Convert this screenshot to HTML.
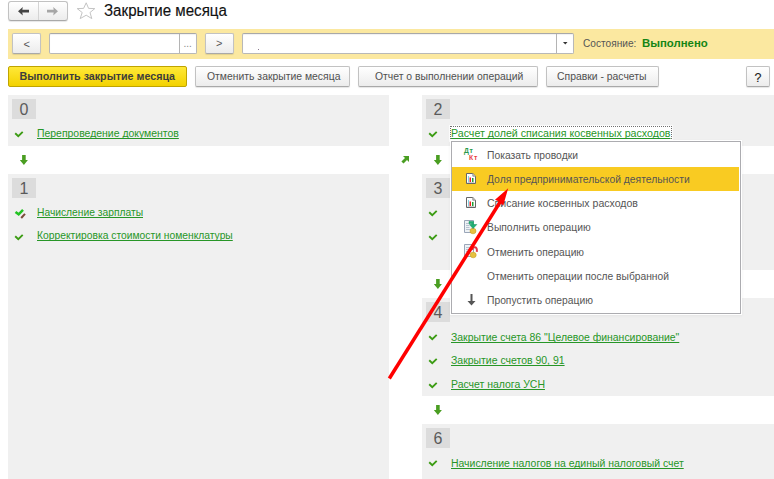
<!DOCTYPE html>
<html><head><meta charset="utf-8">
<style>
*{margin:0;padding:0;box-sizing:border-box}
html,body{width:774px;height:479px;overflow:hidden;background:#fff;font-family:"Liberation Sans",sans-serif;color:#4d4d4d;position:relative}
.a{position:absolute}
.t{position:absolute;white-space:nowrap;line-height:12px;font-size:10.4px}
.btn{position:absolute;border:1px solid #c2c2c2;border-bottom-color:#a9a9a9;border-radius:2px;background:linear-gradient(#ffffff,#ececec);box-shadow:0 1px 1px rgba(0,0,0,.10)}
.inp{position:absolute;background:#fff;border:1px solid #b8b8b8;border-top-color:#a8a8a8;border-radius:2px;box-shadow:inset 0 1px 1px rgba(0,0,0,.06)}
.panel{position:absolute;background:#f0f0f0}
.num{position:absolute;width:24px;height:19.6px;background:#dcdcdc;color:#5a5a5a;font-size:16px;line-height:22px;text-align:center}
.lnk{position:absolute;white-space:nowrap;font-size:10.4px;line-height:12px;color:#279627;text-decoration:underline;text-underline-offset:1px;text-decoration-skip-ink:none}
.chk{position:absolute;width:9px;height:6px}
.darr{position:absolute;width:9px;height:10px}
.mi{position:absolute;left:36px;white-space:nowrap;font-size:10.4px;line-height:12px;color:#4a4a4a}
</style></head><body>

<!-- nav buttons -->
<div class="btn" style="left:8px;top:1px;width:60px;height:20px;border-radius:3px"></div>
<div class="a" style="left:38px;top:2px;width:1px;height:18px;background:#d4d4d4"></div>
<svg class="a" style="left:18px;top:7px" width="12" height="9" viewBox="0 0 12 9"><path d="M0 4.2 L4.8 0 L4.3 2.7 L11 2.7 L11 5.5 L4.3 5.5 L4.8 8.4 Z" fill="#444"/></svg>
<svg class="a" style="left:47px;top:7px" width="12" height="9" viewBox="0 0 12 9"><path d="M11 4.2 L6.2 0 L6.7 2.7 L0 2.7 L0 5.5 L6.7 5.5 L6.2 8.4 Z" fill="#a6a6a6"/></svg>
<!-- star -->
<svg class="a" style="left:76px;top:2px" width="20" height="18" viewBox="0 0 20 18"><path d="M10.2 0.8 L12.6 6.4 L18.8 6.6 L14 10.5 L15.8 16.6 L10.2 13.2 L4.2 16.6 L6.2 10.5 L1.2 6.6 L7.6 6.4 Z" fill="none" stroke="#c4c4c4" stroke-width="1"/></svg>
<div class="t" style="left:104px;top:2px;font-size:16px;line-height:18px;color:#111;transform:scaleX(0.944);transform-origin:0 0;-webkit-text-stroke:0.15px #111">Закрытие месяца</div>

<!-- yellow bar -->
<div class="a" style="left:8px;top:28.5px;width:766px;height:30px;background:#fbe8a0"></div>
<div class="btn" style="left:12px;top:33px;width:29px;height:21px"></div>
<div class="t" style="left:23.5px;top:37.5px;color:#555;font-size:11px">&lt;</div>
<div class="inp" style="left:49px;top:33px;width:148px;height:21px"></div>
<div class="a" style="left:179px;top:34px;width:1px;height:19px;background:#b4b4b4"></div>
<div class="t" style="left:183.5px;top:37.5px;color:#888;font-size:10px">...</div>
<div class="btn" style="left:205px;top:33px;width:29px;height:21px"></div>
<div class="t" style="left:216px;top:37px;color:#555;font-size:11px">&gt;</div>
<div class="inp" style="left:242px;top:33px;width:332px;height:21px"></div>
<div class="a" style="left:258px;top:49px;width:1px;height:1px;background:#8a7a90"></div>
<div class="a" style="left:556px;top:34px;width:1px;height:19px;background:#b4b4b4"></div>
<svg class="a" style="left:562.5px;top:42px" width="5" height="3"><path d="M0 0 L4.5 0 L2.25 2.6 Z" fill="#333"/></svg>
<div class="t" style="left:583px;top:38px;font-size:10.15px;color:#555">Состояние:</div>
<div class="t" style="left:642px;top:37px;font-size:11.4px;font-weight:bold;color:#158515">Выполнено</div>

<!-- action buttons -->
<div class="a" style="left:8px;top:66px;width:179px;height:21px;border:1px solid #bfa400;border-radius:2px;background:linear-gradient(#ffe838,#f3d200)"></div>
<div class="t" style="left:19.5px;top:70.2px;font-size:10.7px;font-weight:bold;color:#3d3d3d">Выполнить закрытие месяца</div>
<div class="btn" style="left:195px;top:66px;width:155px;height:21px"></div>
<div class="t" style="left:207px;top:71px;color:#505050">Отменить закрытие месяца</div>
<div class="btn" style="left:358px;top:66px;width:180px;height:21px"></div>
<div class="t" style="left:375px;top:71px;color:#505050">Отчет о выполнении операций</div>
<div class="btn" style="left:546px;top:66px;width:113px;height:21px"></div>
<div class="t" style="left:557px;top:71px;color:#505050">Справки - расчеты</div>
<div class="btn" style="left:746px;top:66px;width:24px;height:21px"></div>
<div class="t" style="left:754.5px;top:72px;color:#1a1a1a;font-size:12.5px;-webkit-text-stroke:0.1px #1a1a1a">?</div>

<!-- left column -->
<div class="panel" style="left:8px;top:95px;width:381px;height:51px"></div>
<div class="num" style="left:12px;top:99px">0</div>
<svg class="a" style="left:14px;top:130px" width="11" height="9" viewBox="0 0 11 9"><path d="M1.2 3.2 L4.3 6.1 L8.7 1.9" fill="none" stroke="#3c9c14" stroke-width="1.9"/></svg>
<div class="lnk" style="left:37px;top:128.4px;font-size:10.45px">Перепроведение документов</div>
<svg class="a" style="left:20px;top:155px" width="9" height="10" viewBox="0 0 9 10"><path d="M2.1 0 H5.7 V5 H7.9 L3.9 10 L-0.1 5 H2.1 Z" fill="#4a9e22"/></svg>
<div class="panel" style="left:8px;top:174px;width:381px;height:305px"></div>
<div class="num" style="left:12px;top:178px">1</div>
<svg class="a" style="left:13px;top:207px" width="14" height="13" viewBox="0 0 14 13"><path d="M2.5 4.9 L5.7 7.3 L10 2.9" fill="none" stroke="#22c322" stroke-width="2.5"/><path d="M8.2 11 L12 6.8" stroke="#7a4a38" stroke-width="2"/></svg>
<div class="lnk" style="left:37px;top:207.4px;font-size:10.27px">Начисление зарплаты</div>
<svg class="a" style="left:14px;top:233px" width="11" height="9" viewBox="0 0 11 9"><path d="M1.2 3.2 L4.3 6.1 L8.7 1.9" fill="none" stroke="#3c9c14" stroke-width="1.9"/></svg>
<div class="lnk" style="left:37px;top:230.3px;font-size:10.31px">Корректировка стоимости номенклатуры</div>
<div class="panel" style="left:422px;top:95px;width:352px;height:51px"></div>
<div class="num" style="left:426px;top:99px">2</div>
<svg class="a" style="left:428px;top:130px" width="11" height="9" viewBox="0 0 11 9"><path d="M1.2 3.2 L4.3 6.1 L8.7 1.9" fill="none" stroke="#3c9c14" stroke-width="1.9"/></svg>
<div class="a" style="left:450px;top:126px;width:222px;height:15px;background:#fff;border:1px dotted #707070;box-shadow:0 0 0 1px rgba(255,255,255,.7)"></div>
<div class="lnk" style="left:451px;top:127px;font-size:10.65px">Расчет долей списания косвенных расходов</div>
<svg class="a" style="left:400px;top:155px" width="10" height="10" viewBox="0 0 10 10"><path d="M3 1 H9 V7 L7 5 L3.5 8.6 L1.4 6.5 L5 3 Z" fill="#4a9e22"/></svg>
<svg class="a" style="left:434px;top:155px" width="9" height="10" viewBox="0 0 9 10"><path d="M2.1 0 H5.7 V5 H7.9 L3.9 10 L-0.1 5 H2.1 Z" fill="#4a9e22"/></svg>
<div class="panel" style="left:422px;top:174px;width:352px;height:96px"></div>
<div class="num" style="left:426px;top:178px">3</div>
<svg class="a" style="left:428px;top:209px" width="11" height="9" viewBox="0 0 11 9"><path d="M1.2 3.2 L4.3 6.1 L8.7 1.9" fill="none" stroke="#3c9c14" stroke-width="1.9"/></svg>
<svg class="a" style="left:428px;top:233px" width="11" height="9" viewBox="0 0 11 9"><path d="M1.2 3.2 L4.3 6.1 L8.7 1.9" fill="none" stroke="#3c9c14" stroke-width="1.9"/></svg>
<svg class="a" style="left:434px;top:279px" width="9" height="10" viewBox="0 0 9 10"><path d="M2.1 0 H5.7 V5 H7.9 L3.9 10 L-0.1 5 H2.1 Z" fill="#4a9e22"/></svg>
<div class="panel" style="left:422px;top:298px;width:352px;height:98px"></div>
<div class="num" style="left:426px;top:302px">4</div>
<svg class="a" style="left:428px;top:333px" width="11" height="9" viewBox="0 0 11 9"><path d="M1.2 3.2 L4.3 6.1 L8.7 1.9" fill="none" stroke="#3c9c14" stroke-width="1.9"/></svg>
<div class="lnk" style="left:451px;top:332.2px;font-size:10.43px">Закрытие счета 86 "Целевое финансирование"</div>
<svg class="a" style="left:428px;top:357px" width="11" height="9" viewBox="0 0 11 9"><path d="M1.2 3.2 L4.3 6.1 L8.7 1.9" fill="none" stroke="#3c9c14" stroke-width="1.9"/></svg>
<div class="lnk" style="left:451px;top:355.4px;font-size:10.47px">Закрытие счетов 90, 91</div>
<svg class="a" style="left:428px;top:381px" width="11" height="9" viewBox="0 0 11 9"><path d="M1.2 3.2 L4.3 6.1 L8.7 1.9" fill="none" stroke="#3c9c14" stroke-width="1.9"/></svg>
<div class="lnk" style="left:451px;top:379.4px;font-size:10.47px">Расчет налога УСН</div>
<svg class="a" style="left:434px;top:405px" width="9" height="10" viewBox="0 0 9 10"><path d="M2.1 0 H5.7 V5 H7.9 L3.9 10 L-0.1 5 H2.1 Z" fill="#4a9e22"/></svg>
<div class="panel" style="left:422px;top:424px;width:352px;height:55px"></div>
<div class="num" style="left:426px;top:428px">6</div>
<svg class="a" style="left:428px;top:459px" width="11" height="9" viewBox="0 0 11 9"><path d="M1.2 3.2 L4.3 6.1 L8.7 1.9" fill="none" stroke="#3c9c14" stroke-width="1.9"/></svg>
<div class="lnk" style="left:451px;top:457.8px;font-size:10.44px">Начисление налогов на единый налоговый счет</div>
<div class="a" style="left:451px;top:141px;width:290px;height:173px;background:#fff;border:1px solid #acacb0;box-shadow:0 0 0 1px #fff,0 1px 3px 1px rgba(0,0,0,.05)"></div>
<div class="a" style="left:452px;top:167px;width:287px;height:24px;background:#f9cb22"></div>
<div class="t" style="left:487px;top:149.6px;font-size:10.32px;color:#555555">Показать проводки</div>
<div class="t" style="left:487px;top:173.9px;font-size:10.34px;color:#555555">Доля предпринимательской деятельности</div>
<div class="t" style="left:487px;top:197.3px;font-size:10.55px;color:#555555">Списание косвенных расходов</div>
<div class="t" style="left:487px;top:222.4px;font-size:10.32px;color:#555555">Выполнить операцию</div>
<div class="t" style="left:487px;top:246.7px;font-size:10.22px;color:#555555">Отменить операцию</div>
<div class="t" style="left:487px;top:271.0px;font-size:10.25px;color:#555555">Отменить операции после выбранной</div>
<div class="t" style="left:487px;top:295.2px;font-size:10.31px;color:#555555">Пропустить операцию</div>
<div class="t" style="left:464px;top:146.3px;font-size:6.8px;line-height:9px;font-weight:bold;color:#2a9a4a;letter-spacing:0.7px">Дт</div>
<div class="t" style="left:469px;top:153px;font-size:6.8px;line-height:9px;font-weight:bold;color:#e84040;letter-spacing:0.9px">Кт</div>
<svg class="a" style="left:466px;top:173px" width="11" height="12" viewBox="0 0 11 12"><path d="M0.5 0.5 H6.8 L9.5 3.2 V10.5 H0.5 Z" fill="#fff" stroke="#666"/><path d="M6.8 0.5 V3.2 H9.5" fill="#ccc" stroke="#777" stroke-width="0.7"/><rect x="2" y="3" width="1" height="6" fill="#80d4e8"/><rect x="3.5" y="4.5" width="1.5" height="4.5" fill="#f02020"/><rect x="6" y="5" width="1.5" height="4" fill="#20a030"/><path d="M1.5 9.5 H8.5" stroke="#aaa" stroke-width="0.6"/></svg>
<svg class="a" style="left:466px;top:197px" width="11" height="12" viewBox="0 0 11 12"><path d="M0.5 0.5 H6.8 L9.5 3.2 V10.5 H0.5 Z" fill="#fff" stroke="#666"/><path d="M6.8 0.5 V3.2 H9.5" fill="#ccc" stroke="#777" stroke-width="0.7"/><rect x="2" y="3" width="1" height="6" fill="#80d4e8"/><rect x="3.5" y="4.5" width="1.5" height="4.5" fill="#f02020"/><rect x="6" y="5" width="1.5" height="4" fill="#20a030"/><path d="M1.5 9.5 H8.5" stroke="#aaa" stroke-width="0.6"/></svg>
<svg class="a" style="left:463px;top:219px" width="16" height="16" viewBox="0 0 16 16"><path d="M1.5 1.5 H10.5 V13.5 H1.5 Z" fill="#eef2f6" stroke="#9aa6b8"/><path d="M3 4.5 H7 M3 6.5 H6.5 M3 8.5 H6.5 M3 10.5 H7" stroke="#b0bccc" stroke-width="0.9"/><ellipse cx="10" cy="12" rx="3" ry="2.8" fill="#e6c040" stroke="#c9a020" stroke-width="0.6"/><path d="M6 2.5 H10.5 V5.5 H13.8 L10 9.6 L6.6 5.5 H8.6 V4.6 H6 Z" fill="#1fb072" stroke="#10905a" stroke-width="0.5"/></svg>
<svg class="a" style="left:463px;top:243px" width="16" height="16" viewBox="0 0 16 16"><path d="M1.5 1.5 H10.5 V13.5 H1.5 Z" fill="#eef2f6" stroke="#9aa6b8"/><path d="M3 4.5 H7 M3 6.5 H6.5 M3 8.5 H6.5 M3 10.5 H7" stroke="#b0bccc" stroke-width="0.9"/><ellipse cx="10.2" cy="12" rx="3" ry="2.8" fill="#e6c040" stroke="#c9a020" stroke-width="0.6"/><path d="M9.4 7 C9 4.6 10.6 4 12 4.2 C13.4 4.4 14.2 5.8 13.8 8.8" fill="none" stroke="#e03848" stroke-width="2"/></svg>
<svg class="a" style="left:467px;top:294px" width="9" height="12" viewBox="0 0 9 12"><path d="M3.5 0 H5.5 V7 H8.5 L4.5 11.5 L0.5 7 H3.5 Z" fill="#555"/></svg>
<svg class="a" style="left:0;top:0" width="774" height="479" viewBox="0 0 774 479"><path d="M389.3 378.5 L502 199" stroke="#ff0000" stroke-width="3.5" stroke-linecap="butt"/><path d="M508.2 188.3 L495 199.8 L499 201.5 L503.2 205.5 Z" fill="#ff0000"/></svg>
</body></html>
